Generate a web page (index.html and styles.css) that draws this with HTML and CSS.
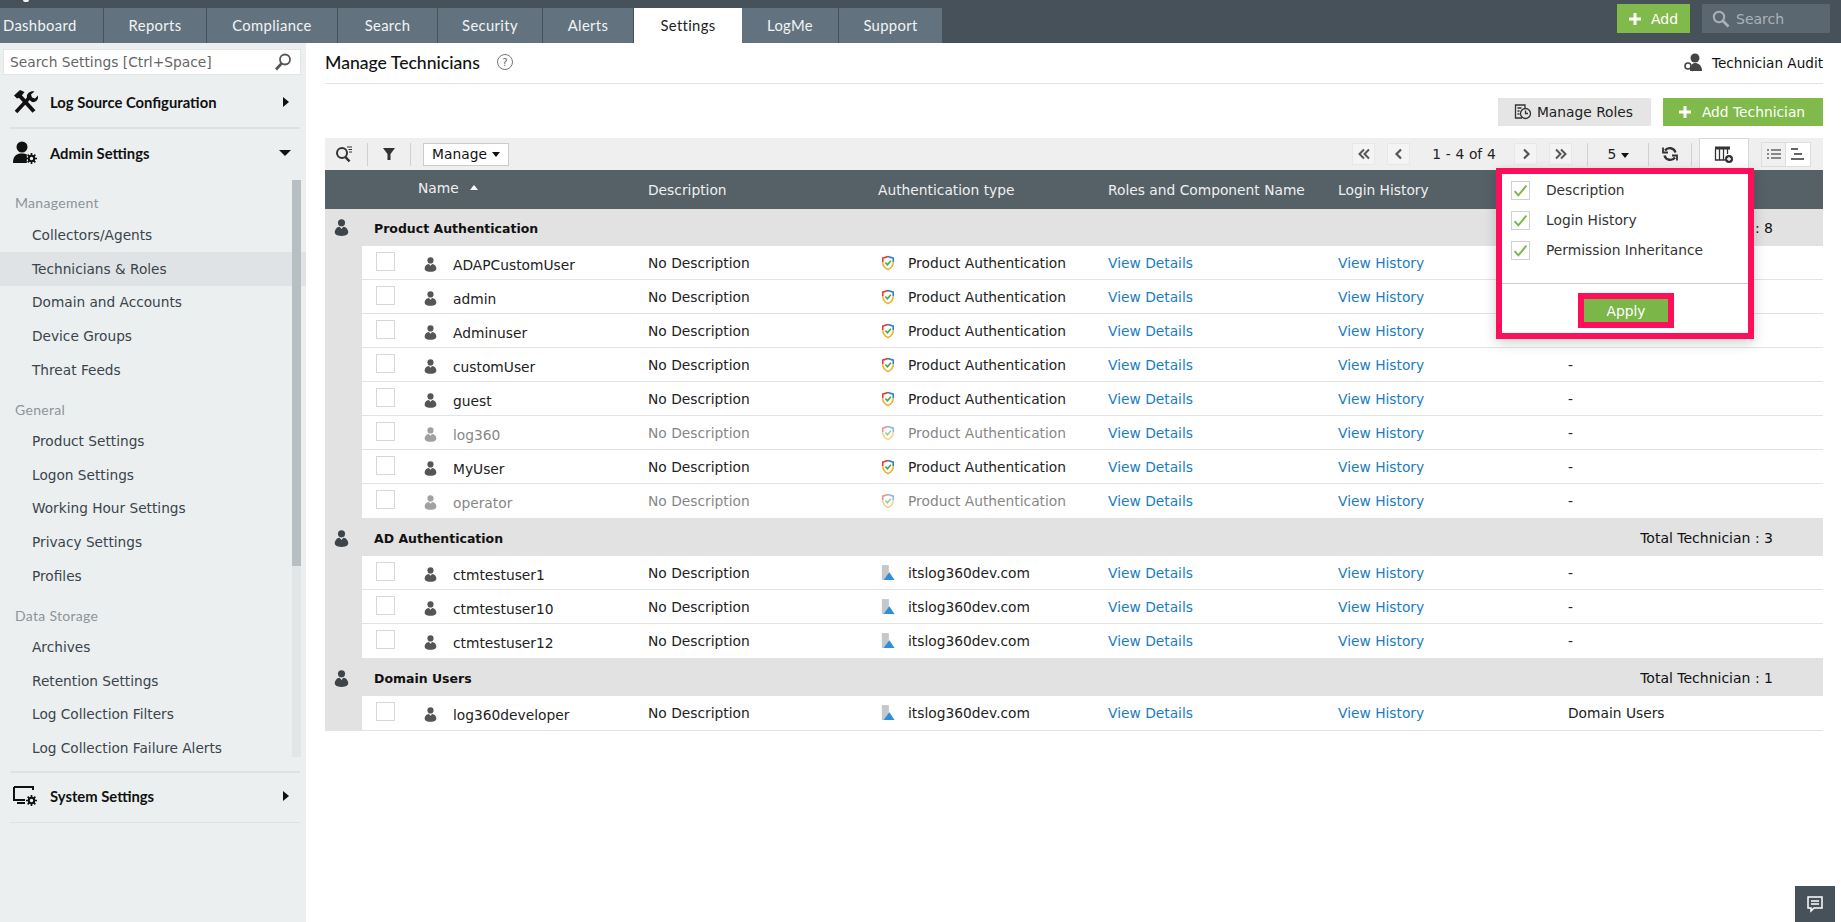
FILE: index.html
```html
<!DOCTYPE html>
<html lang="en">
<head>
<meta charset="utf-8">
<title>Manage Technicians</title>
<link rel="stylesheet" href="styles.css">
</head>
<body>
<svg class="sprite" width="0" height="0">
  <symbol id="user" viewBox="0 0 16 18"><circle cx="8" cy="4" r="3.800"/><path d="M2 10.500c1-1.500 2.500-2 4-2.200L8 10.500l2-2.200c1.500.2 3 .7 4 2.200 1.500 2 1.500 4 .5 5.500-1.500 1.500-4 2-6.500 2s-5-.5-6.500-2c-1-1.500-1-3.500.5-5.500z"/></symbol>
  <symbol id="shield" viewBox="0 0 16 18"><path d="M8 1.500 L2 3.500 V8" fill="none" stroke="#d8402f" stroke-width="1.800"/><path d="M8 1.500 L14 3.500 V8" fill="none" stroke="#2f7fd0" stroke-width="1.800"/><path d="M2 8c0 4 3 7 6 8.500 3-1.500 6-4.500 6-8.500" fill="none" stroke="#eeb134" stroke-width="1.800"/><path d="M5 8.500l2.300 2.500 4-4.500" fill="none" stroke="#45a745" stroke-width="1.800"/></symbol>
  <symbol id="domain" viewBox="0 0 16 18"><rect x="1" y="0" width="8" height="17" fill="#c4c8cb"/><path d="M3 17 L9.500 8 L15.500 17z" fill="#2e8fd6"/></symbol>
  <symbol id="plus" viewBox="0 0 12 12"><path d="M4.500 0h3v4.500H12v3H7.500V12h-3V7.500H0v-3h4.500z"/></symbol>
  <symbol id="gear" viewBox="0 0 12 12"><circle cx="6" cy="6" r="3" fill="none" stroke="currentColor" stroke-width="2.200"/><path d="M6 0v2.500M6 9.500V12M0 6h2.500M9.500 6H12M1.800 1.800l1.800 1.800M8.400 8.400l1.800 1.800M1.800 10.200l1.800-1.800M8.400 3.600l1.800-1.800" stroke="currentColor" stroke-width="1.800"/></symbol>
  <symbol id="chev-l" viewBox="0 0 12 12"><path d="M8 1.500L3.500 6 8 10.500" fill="none" stroke="#555" stroke-width="2.200"/></symbol>
  <symbol id="chev-r" viewBox="0 0 12 12"><path d="M4 1.500L8.500 6 4 10.500" fill="none" stroke="#555" stroke-width="2.200"/></symbol>
  <symbol id="chev-ll" viewBox="0 0 12 12"><path d="M6 1.500L1.500 6 6 10.500M11 1.500L6.500 6 11 10.500" fill="none" stroke="#555" stroke-width="2"/></symbol>
  <symbol id="chev-rr" viewBox="0 0 12 12"><path d="M1 1.500L5.500 6 1 10.500M6 1.500L10.500 6 6 10.500" fill="none" stroke="#555" stroke-width="2"/></symbol>
</svg>

<header class="topbar">
  <i class="logo-sliver"></i>
  <nav class="tabs">
    <a class="tab t1">Dashboard</a><a class="tab t2">Reports</a><a class="tab t3">Compliance</a><a class="tab t4">Search</a><a class="tab t5">Security</a><a class="tab t6">Alerts</a><a class="tab t7 active">Settings</a><a class="tab t8">LogMe</a><a class="tab t9">Support</a>
  </nav>
  <div class="top-actions">
    <a class="top-add"><svg class="ic12"><use href="#plus"/></svg>Add</a>
    <div class="top-search">
      <svg class="ic18" viewBox="0 0 18 18"><circle cx="7" cy="7" r="5.200" fill="none" stroke="#aab2b8" stroke-width="2"/><path d="M11 11l5.500 5.500" stroke="#aab2b8" stroke-width="2.600"/></svg>
      <span>Search</span>
    </div>
  </div>
</header>

<div class="layout">
  <aside class="sidebar">
    <div class="side-search">
      <span>Search Settings [Ctrl+Space]</span>
      <svg class="ic18" viewBox="0 0 18 18"><circle cx="11" cy="6.500" r="5" fill="none" stroke="#555" stroke-width="1.800"/><path d="M7.500 10.500L2 16.500" stroke="#555" stroke-width="2.600"/></svg>
    </div>
    <div class="sec sec-a">
      <svg class="sec-ic" viewBox="0 0 26 26"><path d="M7 6L22 22.500" fill="none" stroke="#111" stroke-width="4"/><path d="M2 6.500L8 1l4.500 2-1.500 2-3 3.500-3 1z" fill="#111"/><path d="M4 23L17 9" fill="none" stroke="#111" stroke-width="3.600"/><path d="M15 9c-1-4 3-7.500 7.500-6.500l-3.500 3 1 3 3 1 3-3c1 3.500-2 7.500-6 6.500z" fill="#111"/></svg>
      <span class="sec-t">Log Source Configuration</span><i class="tri-r"></i>
    </div>
    <div class="sec sec-b">
      <svg class="sec-ic" viewBox="0 0 26 26"><circle cx="10" cy="7" r="5.500" fill="#111"/><path d="M1 23c0-7 3-9.500 9-9.500 2 0 3.500.3 4.800 1v8.500z" fill="#111"/><g transform="translate(14 13)" color="#111"><svg width="11" height="11"><use href="#gear"/></svg></g></svg>
      <span class="sec-t">Admin Settings</span><i class="tri-d"></i>
    </div>
    <div class="menu">
      <div class="bar"></div>
      <h4 class="first">Management</h4>
      <a>Collectors/Agents</a><a class="sel">Technicians &amp; Roles</a><a>Domain and Accounts</a><a>Device Groups</a><a>Threat Feeds</a>
      <h4>General</h4>
      <a>Product Settings</a><a>Logon Settings</a><a>Working Hour Settings</a><a>Privacy Settings</a><a>Profiles</a>
      <h4>Data Storage</h4>
      <a>Archives</a><a>Retention Settings</a><a>Log Collection Filters</a><a>Log Collection Failure Alerts</a>
    </div>
    <div class="sec sec-c">
      <svg class="sec-ic" viewBox="0 0 26 26"><path d="M2 4h19v3M2 4v13h11" fill="none" stroke="#111" stroke-width="2"/><path d="M5 19h8v2H5z" fill="#111"/><g transform="translate(14 12)" color="#111"><svg width="11" height="11"><use href="#gear"/></svg></g></svg>
      <span class="sec-t">System Settings</span><i class="tri-r"></i>
    </div>
  </aside>

  <main class="main">
    <div class="title-row">
      <h1>Manage Technicians</h1>
      <span class="help">?</span>
      <a class="audit">
        <svg class="ic22" viewBox="0 0 22 22" fill="#444"><circle cx="13" cy="6" r="4.500"/><path d="M8 19c0-5 2-8 5-8s7 2 7 8z"/><circle cx="6" cy="14" r="3" fill="#fff" stroke="#444" stroke-width="1.600"/><path d="M8 16l3 3" stroke="#444" stroke-width="1.600"/></svg>
        Technician Audit
      </a>
    </div>

    <div class="actions">
      <a class="btn btn-grey">
        <svg class="ic18" viewBox="0 0 18 18" fill="none" stroke="#333" stroke-width="1.300"><path d="M8 15H1.500V2H11v3"/><path d="M3.500 5h4M3.500 8h2M3.500 11h2"/><circle cx="11.500" cy="10.500" r="5"/><path d="M11.500 7.500v3h2.500"/></svg>
        Manage Roles
      </a>
      <a class="btn btn-green"><svg class="ic12"><use href="#plus"/></svg>Add Technician</a>
    </div>

    <div class="toolbar">
      <svg class="ic18 tool-a" viewBox="0 0 18 18" fill="none" stroke="#333"><circle cx="7" cy="8" r="5" stroke-width="2"/><path d="M10.500 12l4 4.500" stroke-width="2.600"/><path d="M12 2h5M13.500 4.500h3.500M14 7h3" stroke-width="1"/></svg>
      <span class="sep"></span>
      <svg class="ic14 tool-b" viewBox="0 0 14 14" fill="#333"><path d="M1 1h12L8.500 7v6h-3V7z"/></svg>
      <span class="sep"></span>
      <a class="manage">Manage <i class="caret"></i></a>
      <div class="pager">
        <span class="pg"><svg class="ic12 chev"><use href="#chev-ll"/></svg></span><span class="pg"><svg class="ic12 chev"><use href="#chev-l"/></svg></span>
        <span class="pg-text">1 - 4 of 4</span>
        <span class="pg"><svg class="ic12 chev"><use href="#chev-r"/></svg></span><span class="pg pg-end"><svg class="ic12 chev"><use href="#chev-rr"/></svg></span>
        <span class="sep"></span>
        <span class="pg-size">5 <i class="caret"></i></span>
        <span class="sep"></span>
        <svg class="refresh" viewBox="0 0 16 16" fill="none" stroke="#333" stroke-width="2.400"><path d="M13.500 6.500A6 6 0 0 0 3 4.500M2.500 9.500A6 6 0 0 0 13 11.500"/><path d="M1 1.500v5h5M15 14.500v-5h-5" stroke-width="1.800"/></svg>
        <span class="sep"></span>
        <span class="col-tab">
          <svg class="ic20" viewBox="0 0 20 18" fill="none" stroke="#333" stroke-width="1.300"><path d="M1 2h15" stroke-width="3"/><path d="M1.500 3v11h10M5.500 3v11M9.500 3v11M13.500 3v5"/><circle cx="15" cy="13" r="4" fill="#333" stroke="none"/><path d="M15 11v4M13 13h4" stroke="#fff"/></svg>
        </span>
        <span class="view-toggle">
          <span class="vt vt-on"><svg class="ic14" viewBox="0 0 14 14" stroke="#666" stroke-width="1.600"><path d="M0 3h2M4 3h10M0 7h2M4 7h10M0 11h2M4 11h10"/></svg></span>
          <span class="vt"><svg class="ic14" viewBox="0 0 14 14" stroke="#333" stroke-width="1.600"><path d="M0 2h7M3 7h8M0 12h13"/></svg></span>
        </span>
      </div>
    </div>

    <div class="thead">
      <div class="th-name">Name <i class="caret-up"></i></div>
      <div>Description</div><div>Authentication type</div><div>Roles and Component Name</div><div>Login History</div><div></div>
    </div>

    <div class="group"><svg class="g-ic"><use href="#user"/></svg><b>Product Authentication</b><span>Total Technician : 8</span></div>
    <div class="rows">
      <div class="row"><span class="cb"></span><svg class="u-ic"><use href="#user"/></svg><span class="nm">ADAPCustomUser</span><span>No Description</span><span class="au"><svg class="a-ic"><use href="#shield"/></svg>Product Authentication</span><a>View Details</a><a>View History</a><span></span></div>
      <div class="row"><span class="cb"></span><svg class="u-ic"><use href="#user"/></svg><span class="nm">admin</span><span>No Description</span><span class="au"><svg class="a-ic"><use href="#shield"/></svg>Product Authentication</span><a>View Details</a><a>View History</a><span></span></div>
      <div class="row"><span class="cb"></span><svg class="u-ic"><use href="#user"/></svg><span class="nm">Adminuser</span><span>No Description</span><span class="au"><svg class="a-ic"><use href="#shield"/></svg>Product Authentication</span><a>View Details</a><a>View History</a><span></span></div>
      <div class="row"><span class="cb"></span><svg class="u-ic"><use href="#user"/></svg><span class="nm">customUser</span><span>No Description</span><span class="au"><svg class="a-ic"><use href="#shield"/></svg>Product Authentication</span><a>View Details</a><a>View History</a><span>-</span></div>
      <div class="row"><span class="cb"></span><svg class="u-ic"><use href="#user"/></svg><span class="nm">guest</span><span>No Description</span><span class="au"><svg class="a-ic"><use href="#shield"/></svg>Product Authentication</span><a>View Details</a><a>View History</a><span>-</span></div>
      <div class="row off"><span class="cb"></span><svg class="u-ic"><use href="#user"/></svg><span class="nm">log360</span><span>No Description</span><span class="au"><svg class="a-ic"><use href="#shield"/></svg>Product Authentication</span><a>View Details</a><a>View History</a><span>-</span></div>
      <div class="row"><span class="cb"></span><svg class="u-ic"><use href="#user"/></svg><span class="nm">MyUser</span><span>No Description</span><span class="au"><svg class="a-ic"><use href="#shield"/></svg>Product Authentication</span><a>View Details</a><a>View History</a><span>-</span></div>
      <div class="row off last"><span class="cb"></span><svg class="u-ic"><use href="#user"/></svg><span class="nm">operator</span><span>No Description</span><span class="au"><svg class="a-ic"><use href="#shield"/></svg>Product Authentication</span><a>View Details</a><a>View History</a><span>-</span></div>
    </div>

    <div class="group tall"><svg class="g-ic"><use href="#user"/></svg><b>AD Authentication</b><span>Total Technician : 3</span></div>
    <div class="rows">
      <div class="row"><span class="cb"></span><svg class="u-ic"><use href="#user"/></svg><span class="nm">ctmtestuser1</span><span>No Description</span><span class="au"><svg class="a-ic"><use href="#domain"/></svg>itslog360dev.com</span><a>View Details</a><a>View History</a><span>-</span></div>
      <div class="row"><span class="cb"></span><svg class="u-ic"><use href="#user"/></svg><span class="nm">ctmtestuser10</span><span>No Description</span><span class="au"><svg class="a-ic"><use href="#domain"/></svg>itslog360dev.com</span><a>View Details</a><a>View History</a><span>-</span></div>
      <div class="row last"><span class="cb"></span><svg class="u-ic"><use href="#user"/></svg><span class="nm">ctmtestuser12</span><span>No Description</span><span class="au"><svg class="a-ic"><use href="#domain"/></svg>itslog360dev.com</span><a>View Details</a><a>View History</a><span>-</span></div>
    </div>

    <div class="group tall"><svg class="g-ic"><use href="#user"/></svg><b>Domain Users</b><span>Total Technician : 1</span></div>
    <div class="rows">
      <div class="row final"><span class="cb"></span><svg class="u-ic"><use href="#user"/></svg><span class="nm">log360developer</span><span>No Description</span><span class="au"><svg class="a-ic"><use href="#domain"/></svg>itslog360dev.com</span><a>View Details</a><a>View History</a><span>Domain Users</span></div>
    </div>

    <div class="popover">
      <label><span class="chk"><svg viewBox="0 0 14 14"><path d="M1.500 7.500l3.500 4L12.500 2.500" fill="none" stroke="#7ab648" stroke-width="1.800"/></svg></span>Description</label>
      <label><span class="chk"><svg viewBox="0 0 14 14"><path d="M1.500 7.500l3.500 4L12.500 2.500" fill="none" stroke="#7ab648" stroke-width="1.800"/></svg></span>Login History</label>
      <label><span class="chk"><svg viewBox="0 0 14 14"><path d="M1.500 7.500l3.500 4L12.500 2.500" fill="none" stroke="#7ab648" stroke-width="1.800"/></svg></span>Permission Inheritance</label>
      <div class="pop-foot"><a class="apply">Apply</a></div>
    </div>
  </main>
</div>

<a class="chat"><svg class="ic18" viewBox="0 0 18 18" fill="none" stroke="#fff" stroke-width="1.500"><path d="M2 2h14v11H8l-3 3v-3H2z"/><path d="M5 6h8M5 9h8"/></svg></a>
</body>
</html>
```
FILE: styles.css
```css
* { box-sizing: border-box; }
html, body { margin: 0; height: 100%; overflow: hidden; }
body { font: 13.800px "DejaVu Sans", Verdana, sans-serif; color: #222; background: #fff; }
a { color: inherit; text-decoration: none; }
.sprite { position: absolute; }
.ic12 { width: 12px; height: 12px; fill: #fff; flex: none; }
.ic14 { width: 14px; height: 14px; flex: none; }
.ic18 { width: 18px; height: 18px; flex: none; }
.ic20 { width: 20px; height: 18px; flex: none; }
.ic22 { width: 22px; height: 22px; flex: none; }

.topbar { height: 43px; background: #465159; display: flex; justify-content: space-between; align-items: flex-end; position: relative; }
.logo-sliver { position: absolute; left: 23px; top: 0; width: 6px; height: 2px; background: #f4f4f4; border-radius: 0 0 3px 3px; }
.tabs { display: flex; height: 35px; }
.tab { display: flex; align-items: center; justify-content: center; padding-bottom: 1px; background: #62737f; color: #f2f4f5; font: 14.800px "Lato", sans-serif; letter-spacing: .35px; border-right: 1px solid #465159; }
.t1 { width: 104px; justify-content: flex-start; padding-left: 3px; }
.t2 { width: 103px; } .t3 { width: 131px; } .t4 { width: 100px; } .t5 { width: 105px; } .t6 { width: 91px; }
.t7 { width: 108px; } .t8 { width: 97px; } .t9 { width: 104px; }
.tab.active { background: #fff; color: #222; border-right: 0; }
.top-actions { display: flex; gap: 12px; align-self: flex-start; margin-top: 4px; margin-right: 11px; }
.top-add { width: 73px; height: 29px; background: #80ba4a; color: #fff; display: flex; align-items: center; justify-content: center; gap: 10px; font-size: 14px; }
.top-search { width: 128px; height: 29px; background: #5b6770; color: #aab2b8; display: flex; align-items: center; gap: 6px; padding-left: 10px; font-size: 14px; }

.layout { display: flex; height: 879px; }
.sidebar { width: 306px; background: #ebeff0; padding: 6px 0 0; flex: none; position: relative; }
.side-search { width: 298px; height: 26px; margin-left: 3px; background: #fff; border: 1px solid #e2e5e6; color: #666; display: flex; align-items: center; justify-content: space-between; padding: 0 8px 0 6px; }
.sec { display: flex; align-items: center; margin: 0 6px 0 10px; padding-left: 2px; color: #111; }
.sec-ic { width: 26px; height: 26px; flex: none; margin-right: 12px; }
.sec-t { font: bold 14.800px "Lato", sans-serif; flex: 1; }
.sec-a { height: 54px; border-bottom: 2px solid #dfe2e3; padding-top: 2px; }
.sec-b { height: 47px; }
.sec-c { height: 52px; border-top: 2px solid #dfe2e3; border-bottom: 1px solid #dfe2e3; padding-bottom: 3px; }
.tri-r { border-left: 6px solid #111; border-top: 5px solid transparent; border-bottom: 5px solid transparent; margin-right: 11px; }
.tri-d { border-top: 6px solid #111; border-left: 6px solid transparent; border-right: 6px solid transparent; margin-right: 9px; }
.menu { position: relative; height: 595px; }
.menu h4 { margin: 0; box-sizing: content-box; height: 23px; padding: 14px 0 0 15px; font: 14px/18px "Lato", sans-serif; color: #8e9499; letter-spacing: .3px; }
.menu h4.first { padding-top: 18px; height: 24px; }
.menu a { display: flex; align-items: center; height: 33.800px; padding-left: 32px; font-size: 13.700px; color: #3a444c; }
.menu a.sel { background: #e0e3e5; }
.bar { position: absolute; left: 292px; top: 4px; width: 9px; height: 577px; background: #e3e6e7; }
.bar::before { content: ""; position: absolute; left: 0; top: 0; width: 9px; height: 386px; background: #b8bfc3; }

.main { flex: 1; padding: 0 18px 0 19px; position: relative; min-width: 0; }
.title-row { height: 41px; display: flex; align-items: center; border-bottom: 1px solid #e2e2e2; padding-bottom: 2px; }
h1 { margin: 0; font: 500 17.600px "Lato", sans-serif; color: #111; }
.help { width: 16px; height: 16px; margin-left: 17px; border: 1.500px solid #777; border-radius: 50%; font-size: 10px; color: #666; display: flex; align-items: center; justify-content: center; }
.audit { margin-left: auto; display: flex; align-items: center; gap: 8px; font-size: 13.600px; color: #111; padding-top: 2px; }
.actions { display: flex; justify-content: flex-end; gap: 12px; margin-top: 14px; height: 28px; }
.btn { display: flex; align-items: center; justify-content: center; padding-right: 2px; }
.btn-grey { width: 153px; background: #e5e5e5; color: #222; gap: 5px; }
.btn-green { width: 160px; background: #80ba4a; color: #fff; gap: 11px; }
.toolbar { margin-top: 12px; height: 32px; background: #efefef; display: flex; align-items: center; padding-left: 10px; position: relative; }
.sep { width: 1px; height: 23px; background: #d0d0d0; flex: none; }
.tool-a { margin-right: 14px; }
.tool-b { margin: 0 14px; }
.manage { margin-left: 12px; height: 23px; width: 86px; background: #fff; border: 1px solid #ccc; display: flex; align-items: center; justify-content: center; gap: 5px; color: #111; }
.caret { display: inline-block; vertical-align: middle; border-top: 5px solid #111; border-left: 4.500px solid transparent; border-right: 4.500px solid transparent; }
.pager { margin-left: auto; display: flex; align-items: center; height: 32px; padding-right: 12px; }
.pg { width: 23px; height: 22px; background: #f4f4f4; border: 1px solid #e8e8e8; display: flex; align-items: center; justify-content: center; margin-right: 12px; }
.pg-end { margin-right: 15px; }
.chev { fill: none; }
.pg-text { width: 84px; margin: 0 8px 0 0; text-align: center; color: #222; word-spacing: .3px; white-space: nowrap; }
.pg-size { width: 60px; text-align: center; color: #222; }
.refresh { width: 16px; height: 16px; margin: 0 13px; flex: none; }
.col-tab { width: 50px; height: 32px; background: #fff; border: 1px solid #d8d8d8; border-bottom: 0; display: flex; align-items: center; justify-content: center; margin-left: 7px; }
.view-toggle { display: flex; margin-left: 12px; border: 1px solid #ddd; }
.vt { width: 24px; height: 23px; background: #fff; display: flex; align-items: center; justify-content: center; }
.vt-on { background: #f0f0f0; border-right: 1px solid #ddd; }

.thead { height: 39px; background: #566067; color: #eef0f1; display: grid; grid-template-columns: 323px 230px 230px 230px 230px 1fr; align-items: center; }
.th-name { padding-left: 93px; padding-bottom: 4px; display: flex; align-items: center; gap: 11px; }
.caret-up { border-bottom: 5px solid #fff; border-left: 4.500px solid transparent; border-right: 4.500px solid transparent; }
.group { height: 37px; background: #e2e2e2; display: flex; align-items: center; padding-right: 50px; }
.group.tall { height: 38px; padding-top: 2px; }
.g-ic { width: 15px; height: 17px; fill: #3d444a; margin: 0 25px 0 9px; flex: none; }
.group b { font-size: 12.500px; color: #111; flex: 1; margin-top: 1px; }
.group span { color: #111; font-size: 14px; }
.rows { background: #e2e2e2; padding-left: 37px; }
.row { height: 34px; background: #fff; border-bottom: 1px solid #e3e3e3; display: grid; grid-template-columns: 51px 40px 195px 230px 230px 230px 230px 1fr; align-items: center; color: #222; }
.row.last { border-bottom: 0; }
.row.final { height: 35px; }
.row > a { color: #1b7cc2; }
.cb { width: 19px; height: 19px; background: #fff; border: 1px solid #d5d7d8; margin-left: 14px; margin-top: -3px; }
.u-ic { width: 13px; height: 15px; fill: #555; margin: 3px 0 0 11px; }
.nm { margin-top: 4px; }
.au { display: flex; align-items: center; }
.a-ic { width: 14px; height: 16px; margin: 0 13px 0 3px; flex: none; }
.off .nm, .off > span:nth-child(4), .off .au, .off .u-ic { opacity: .55; }

.popover { position: absolute; left: 1190px; top: 125px; width: 258px; height: 171px; background: #fff; border: 6px solid #ff0f5a; box-shadow: 0 4px 12px rgba(0,0,0,.18); padding-top: 1px; }
.popover label { display: flex; align-items: center; height: 30px; padding-left: 9px; color: #333; }
.chk { width: 19px; height: 19px; border: 1px solid #cfd2d4; margin-right: 16px; display: flex; align-items: center; justify-content: center; background: #fff; }
.chk svg { width: 15px; height: 15px; }
.pop-foot { border-top: 1px solid #ccc; margin-top: 18px; height: 54px; display: flex; align-items: center; justify-content: center; padding-left: 2px; }
.apply { width: 96px; height: 35px; border: 6px solid #ff0f5a; background: #7ab648; color: #fff; display: flex; align-items: center; justify-content: center; }
.chat { position: fixed; right: 6px; bottom: 0; width: 40px; height: 36px; background: #465159; display: flex; align-items: center; justify-content: center; }
```
